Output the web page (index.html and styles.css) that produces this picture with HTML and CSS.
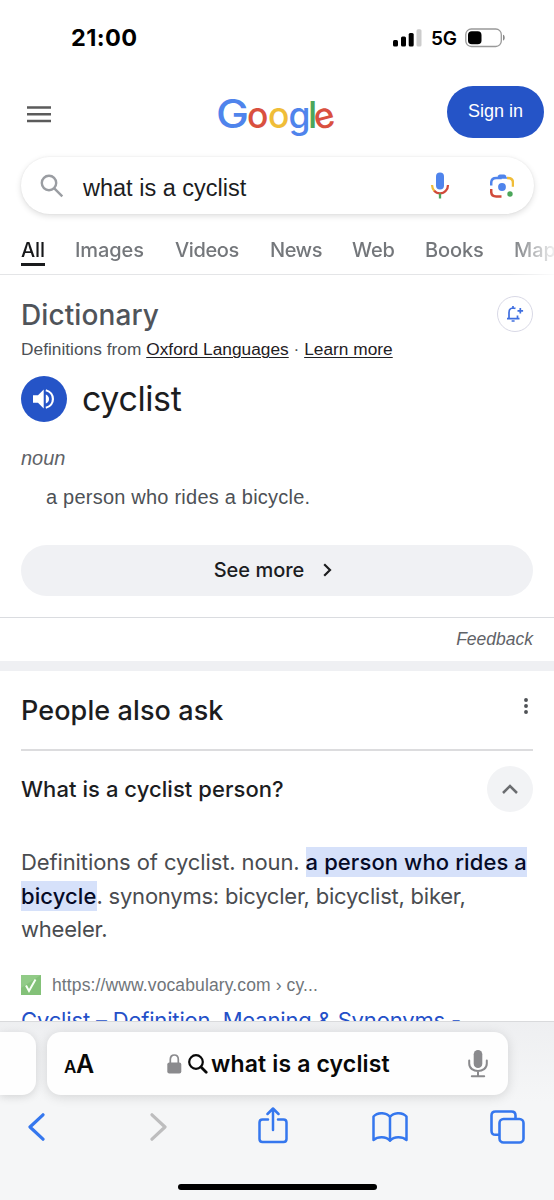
FILE: index.html
```
<!DOCTYPE html>
<html lang="en">
<head>
<meta charset="utf-8">
<title>what is a cyclist</title>
<link rel="stylesheet" href="styles.css">
</head>
<body>
<div class="phone">
<main class="page">
  <div class="status">
    <span class="clock">21:00</span>
    <svg class="signal" width="29" height="18" viewBox="0 0 29 18"><rect x="0" y="11" width="5" height="6.5" rx="1.5"/><rect x="8" y="7.5" width="5" height="10" rx="1.5"/><rect x="15.7" y="4" width="5" height="13.500" rx="1.500"/><rect x="23.500" y="0.300" width="5" height="17.200" rx="1.500" fill="#ccc"/></svg>
    <span class="net">5G</span>
    <svg class="battery" width="41" height="20" viewBox="0 0 41 20"><rect x=".8" y="1" width="35.500" height="17.500" rx="5.500" fill="none" stroke="#999" stroke-width="1.300"/><rect x="3" y="3.300" width="13.500" height="13" rx="3.800"/><path d="M38 6.800c2.300.5 2.300 5.300 0 5.800z" fill="#888"/></svg>
  </div>
  <header class="header">
    <svg class="menu" width="24" height="17" viewBox="0 0 24 17"><path d="M0 1.500h24M0 8.200h24M0 15h24" stroke="#5b5b5b" stroke-width="2.400"/></svg>
    <svg class="logo" width="120" height="56" viewBox="0 0 120 56"><g class="logo-text"><text class="logo-cap" x="-2" y="42" fill="#4f84ec" textLength="33" lengthAdjust="spacingAndGlyphs">G</text><text x="29" y="42" fill="#d9503f">o</text><text x="50" y="42" fill="#f0bd38">o</text><text x="70.500" y="42" fill="#4f84ec">g</text><text class="logo-tall" x="90" y="42" fill="#4ba65a">l</text><text x="96" y="42" fill="#d9503f" transform="rotate(-14 106 32.500)">e</text></g></svg>
    <button class="signin">Sign in</button>
  </header>
  <div class="search">
    <svg class="glass" width="24" height="24" viewBox="0 0 24 24" fill="none" stroke="#9a9da2" stroke-width="2.400"><circle cx="9" cy="9" r="7.200"/><path d="M14.300 14.300l8 8"/></svg>
    <span class="query">what is a cyclist</span>
    <svg class="mic" width="20" height="27" viewBox="0 0 20 27"><rect x="6" y="0.500" width="8" height="17" rx="4" fill="#4f84ec"/><g fill="none" stroke-width="2.300"><path d="M2 13q.2 3.500 2.400 6" stroke="#f0bd38"/><path d="M4.200 18.800c3 3.500 8.600 3.500 11.600 0Q18 16.500 18 13" stroke="#d14a3a"/><path d="M10 21.500v5" stroke="#4ba65a"/></g></svg>
    <svg class="lens" width="24" height="24" viewBox="0 0 24 24"><path d="M1.200 11.500V9q0-5 5-5h5.500" fill="none" stroke="#4f84ec" stroke-width="2.500"/><path d="M6.500 4.800L8.500 1.200Q9 .5 10 .5h4q1 0 1.500.7l2 3.600z" fill="#4f84ec"/><path d="M17 4h1q5 0 5 5v3.800" fill="none" stroke="#f0bd38" stroke-width="2.500"/><path d="M1.200 15v2.500q0 5 5 5H11.500" fill="none" stroke="#d14a3a" stroke-width="2.500"/><circle cx="12" cy="13" r="3.900" fill="#4f84ec"/><circle cx="20" cy="20" r="2.700" fill="#4ba65a"/></svg>
  </div>
  <nav class="tabs"><a class="tab active">All</a><a class="tab t2">Images</a><a class="tab t3">Videos</a><a class="tab t4">News</a><a class="tab t5">Web</a><a class="tab t6">Books</a><a class="tab t7">Maps</a></nav>

  <section class="dict">
    <div class="dict-head"><h2>Dictionary</h2>
      <span class="bell"><svg width="18" height="18" viewBox="0 0 18 18" fill="none" stroke="#3f6fe0" stroke-width="1.700"><path d="M1 13.700h12.500M3 13.500V7.500Q3 3.200 7 3Q8.500 3 9.500 3.600M7 3V1M11.500 10.500v3M11.500 5.800h5.600M14.300 3v5.600M5.600 16h3"/></svg></span></div>
    <p class="source">Definitions from <u>Oxford Languages</u> · <u>Learn more</u></p>
    <div class="word"><span class="speak"><svg width="24" height="24" viewBox="0 0 24 24"><path d="M1 8.200h5L11.700 2.500v19L6 15.800H1z" fill="#fff"/><path d="M13.800 7.500q3.200 1.500 3.200 4.500t-3.200 4.500z" fill="#fff"/><path d="M13.800 3.200c9.500 2.200 9.500 15.400 0 17.600" fill="none" stroke="#fff" stroke-width="2.200"/></svg></span><span class="headword">cyclist</span></div>
    <p class="pos">noun</p>
    <p class="def">a person who rides a bicycle.</p>
    <button class="more"><span>See more</span><svg width="9" height="14" viewBox="0 0 9 14" fill="none" stroke="#1c1d1f" stroke-width="2.200"><path d="M1.200 1.200L7 7l-5.800 5.800"/></svg></button>
  </section>
  <div class="feedback">Feedback</div>
  <section class="paa">
    <div class="paa-head"><h2>People also ask</h2><svg width="4" height="16" viewBox="0 0 4 16" fill="#4f5256"><circle cx="2" cy="2" r="1.950"/><circle cx="2" cy="8" r="1.950"/><circle cx="2" cy="14" r="1.950"/></svg></div>
    <div class="question"><span>What is a cyclist person?</span><span class="fold"><svg width="16" height="10" viewBox="0 0 16 10" fill="none" stroke="#6b6d70" stroke-width="2.500"><path d="M1 9l7-7 7 7"/></svg></span></div>
    <p class="answer"><span class="l1">Definitions of cyclist. noun. </span><mark class="m1">a person who rides a</mark><br><mark class="m2">bicycle</mark><span class="l2">. synonyms: bicycler, bicyclist, biker,</span><br><span class="l3">wheeler.</span></p>
    <div class="site"><svg width="20" height="20" viewBox="0 0 20 20"><path fill="#83c178" d="M0 0h20v20H0z"/><path d="M0 0h20L0 13z" fill="#91cb87"/><path d="M5 10.500l3 5.500 6.500-11.500" fill="none" stroke="#f7fff5" stroke-width="2"/></svg><span>https://www.vocabulary.com › cy...</span></div>
    <div class="result">Cyclist – Definition, Meaning &amp; Synonyms -</div>
  </section>
</main>
<footer class="safari">
  <div class="bar">
    <div class="prev"></div>
    <div class="address">
      <span class="aa"><small>A</small>A</span>
      <svg class="lock" width="15" height="20" viewBox="0 0 15 20"><rect x=".3" y="8.500" width="14" height="11" rx="2" fill="#8a8a8d"/><path d="M3.300 9V5.500c0-6 8-6 8 0V9" fill="none" stroke="#8a8a8d" stroke-width="1.700"/></svg>
      <svg class="find" width="20" height="20" viewBox="0 0 20 20" fill="none" stroke="#080808" stroke-width="2.200" stroke-linecap="round"><circle cx="8" cy="8" r="6.800"/><path d="M13 13l5.200 5.200" stroke-width="2.800"/></svg>
      <span class="url">what is a cyclist</span>
      <svg class="dictate" width="20" height="28" viewBox="0 0 20 28"><rect x="5.700" y="0" width="8.600" height="18" rx="4.300" fill="#8a8a8d"/><path d="M1.200 10.500v3c0 10 17.600 10 17.600 0v-3M10 21v5M3.800 26.300h12.400" fill="none" stroke="#8a8a8d" stroke-width="2" stroke-linecap="round"/></svg>
    </div>
  </div>
  <div class="tools">
    <svg width="17" height="28" viewBox="0 0 17 28" fill="none" stroke="#3577ee" stroke-width="3.200" stroke-linecap="round" stroke-linejoin="round"><path d="M15 1.800L2 14l13 12.200"/></svg>
    <svg class="fwd" width="17" height="28" viewBox="0 0 17 28" fill="none" stroke="#bdbdbe" stroke-width="3.200" stroke-linecap="round" stroke-linejoin="round"><path d="M2 1.800L15 14 2 26.200"/></svg>
    <svg class="share" width="30" height="37" viewBox="0 0 30 37" fill="none" stroke="#3577ee" stroke-width="2.500" stroke-linecap="round" stroke-linejoin="round"><path d="M10 12.500H4.500q-3 0-3 3V32q0 3 3 3h21q3 0 3-3V15.500q0-3-3-3H20M15 23V1.800M9.500 7L15 1.500 20.500 7"/></svg>
    <svg class="book" width="36" height="31" viewBox="0 0 36 31" fill="none" stroke="#3577ee" stroke-width="2.500" stroke-linejoin="round"><path d="M18 5C14-.2 5.500.3 1.500 4.500V28c4-3.500 12.500-4 16.500.8C22 24 30.500 24.500 34.500 28V4.500C30.500.3 22-.2 18 5zM18 5v23.800"/></svg>
    <svg class="wins" width="35" height="34" viewBox="0 0 35 34" fill="none" stroke="#3577ee" stroke-width="2.600"><rect x="9.500" y="9" width="24" height="23.500" rx="4"/><path d="M9.500 24.800H5.500q-4 0-4-4V5.500q0-4 4-4H21.500q4 0 4 4V9"/></svg>
  </div>
  <div class="home"></div>
</footer>
</div>
</body>
</html>
```
FILE: styles.css
```
* { box-sizing: border-box; }
body { margin: 0; background: #fff; font-family: Inter, "Open Sans", sans-serif; color: #1c1d1f; }
h2, p { margin: 0; font-weight: 400; }
button { border: 0; font: inherit; padding: 0; }
svg { display: block; flex: none; }
.phone { width: 554px; height: 1200px; display: flex; flex-direction: column; overflow: hidden; }
.page { height: 1021px; flex: none; overflow: hidden; }
.status { height: 75px; display: flex; align-items: center; padding-left: 71px; color: #000; }
.clock { font-size: 23.5px; font-weight: 700; width: 322px; letter-spacing: .4px; }
.net { font-size: 19px; font-weight: 600; width: 34px; margin-left: 9px; letter-spacing: -.3px; padding-top: 2px; }
.header { height: 82px; display: flex; align-items: flex-start; padding: 11px 10px 0 27px; }
.menu { margin-top: 20px; }
.logo { margin: 0 0 0 167px; overflow: visible; }
.logo-text { font: 500 35.5px Inter, sans-serif; }
.logo-cap { font-size: 40px; }
.logo-tall { font-size: 37px; }
.signin { margin-left: auto; width: 97px; height: 52px; border-radius: 26px; background: #2554c7; color: #fff; font: 18px "Liberation Sans", Arial, sans-serif; padding-bottom: 2px; }
.search { height: 57px; margin: 0 20px 0 21px; border-radius: 29px; box-shadow: 0 2px 6px #0002, 0 0 2px #0001; display: flex; align-items: center; padding: 0 19px; }
.query { font: 23.5px/30px "Liberation Sans", Arial, sans-serif; margin: 4px 0 0 19px; width: 347px; }
.lens { margin-left: 40px; }
.tabs { height: 61px; padding: 22px 0 0 21px; border-bottom: 1px solid #e4e5e7; box-shadow: 0 1px 3px #0001; display: flex; align-items: flex-start; white-space: nowrap; overflow: hidden; font-size: 20px; line-height: 28px; font-weight: 500; letter-spacing: -.1px; color: #74777b; -webkit-mask-image: linear-gradient(90deg, #000 510px, #0000 560px); mask-image: linear-gradient(90deg, #000 510px, #0000 560px); }
.active { color: #17181a; border-bottom: 3px solid #1a1b1d; height: 30px; width: 24px; margin-right: 30px; }
.tab { flex: none; }
.t2 { width: 100px; } .t3 { width: 95px; letter-spacing: -.4px; } .t4 { width: 82px; letter-spacing: -.5px; } .t5 { width: 73px; } .t6 { width: 89px; }
.dict { height: 343px; padding: 21px 21px 0 21px; border-bottom: 1px solid #dadce0; }
.dict-head { height: 41px; display: flex; justify-content: space-between; color: #50545a; }
.dict-head h2 { font-size: 28px; line-height: 38px; font-weight: 500; letter-spacing: .1px; }
.bell { width: 36px; height: 36px; border: 1px solid #d9d9e6; border-radius: 50%; display: grid; place-items: center; }
.source { height: 39px; font: 17.3px/24px "Liberation Sans", Arial, sans-serif; letter-spacing: .02px; color: #4d5156; white-space: nowrap; }
.source u { color: #1f2023; text-underline-offset: 2px; text-decoration-thickness: 1px; }
.word { height: 46px; display: flex; align-items: center; }
.speak { width: 46px; height: 46px; border-radius: 50%; background: #2554c7; display: grid; place-items: center; }
.headword { margin-left: 15px; font-size: 34px; line-height: 46px; letter-spacing: -.4px; }
.pos { margin-top: 23px; font: italic 20px/26px "Liberation Sans", Arial, sans-serif; color: #5f6368; }
.def { margin: 13px 0 0 25px; font: 20px/26px "Liberation Sans", Arial, sans-serif; letter-spacing: .22px; color: #4d5156; }
.more { margin-top: 35px; width: 100%; height: 51px; border-radius: 26px; background: #f0f1f4; color: #1c1d1f; display: flex; align-items: center; justify-content: center; gap: 19px; font-size: 20px; font-weight: 500; padding: 0 8px 1px 0; }
.feedback { height: 53px; padding-right: 21px; text-align: right; font: italic 17.5px/42px "Liberation Sans", Arial, sans-serif; color: #5f6368; border-bottom: 10px solid #eff0f3; }
.paa { padding: 0 21px 0 21px; }
.paa-head { height: 80px; display: flex; align-items: center; justify-content: space-between; border-bottom: 2px solid #dcdcde; padding-right: 5px; }
.paa-head svg { margin-bottom: 8px; }
.paa-head h2 { font-size: 27px; font-weight: 500; line-height: 40px; letter-spacing: .1px; padding-top: 1px; }
.question { height: 77px; padding-bottom: 2px; display: flex; align-items: center; justify-content: space-between; font-size: 22px; font-weight: 500; letter-spacing: .06px; }
.fold { width: 46px; height: 46px; border-radius: 50%; background: #f2f3f5; display: grid; place-items: center; }
.answer { margin-top: 18px; font-size: 22px; line-height: 33.5px; color: #4a4c50; white-space: nowrap; }
.l1 { letter-spacing: -.11px; }
.l2 { letter-spacing: -.23px; }
.l3 { letter-spacing: -.2px; }
mark { background: #d6e1fa; color: #050a26; font-weight: 500; padding: 2px 0; letter-spacing: .1px; }
.site { margin-top: 28px; display: flex; align-items: center; height: 21px; gap: 11px; font: 17.5px/21px "Liberation Sans", Arial, sans-serif; letter-spacing: .12px; color: #70757a; }
.result { margin-top: 9px; font-size: 22px; line-height: 30px; letter-spacing: -.16px; color: #2450c8; white-space: nowrap; }
.safari { height: 179px; flex: none; background: linear-gradient(#eeeff1, #f5f6f7 80px); border-top: 1px solid #d9dadc; position: relative; overflow: hidden; }
.bar { height: 73px; padding-top: 10px; display: flex; gap: 11px; }
.prev { width: 36px; height: 63px; border-radius: 0 14px 14px 0; background: #fefefe; box-shadow: 0 2px 9px #0002; }
.address { width: 461px; height: 63px; border-radius: 14px; background: #fefefe; box-shadow: 0 2px 12px #0002; display: flex; align-items: center; padding-left: 17px; color: #080808; }
.aa { width: 103px; font-size: 25px; font-weight: 600; letter-spacing: -.3px; }
.aa small { font-size: 17px; }
.find { margin-left: 6px; }
.url { width: 257px; margin-left: 3px; font-size: 23px; font-weight: 600; letter-spacing: .15px; white-space: nowrap; }
.tools { height: 70px; display: flex; padding-left: 28px; align-items: center; margin-top: -3px; }
.fwd { margin-left: 105px; }
.share { margin-left: 91px; margin-top: -4px; }
.book { margin-left: 84px; }
.wins { margin-left: 82px; }
.home { width: 199px; height: 6px; border-radius: 3px; background: #000; margin: 22px 0 0 178px; }
```
